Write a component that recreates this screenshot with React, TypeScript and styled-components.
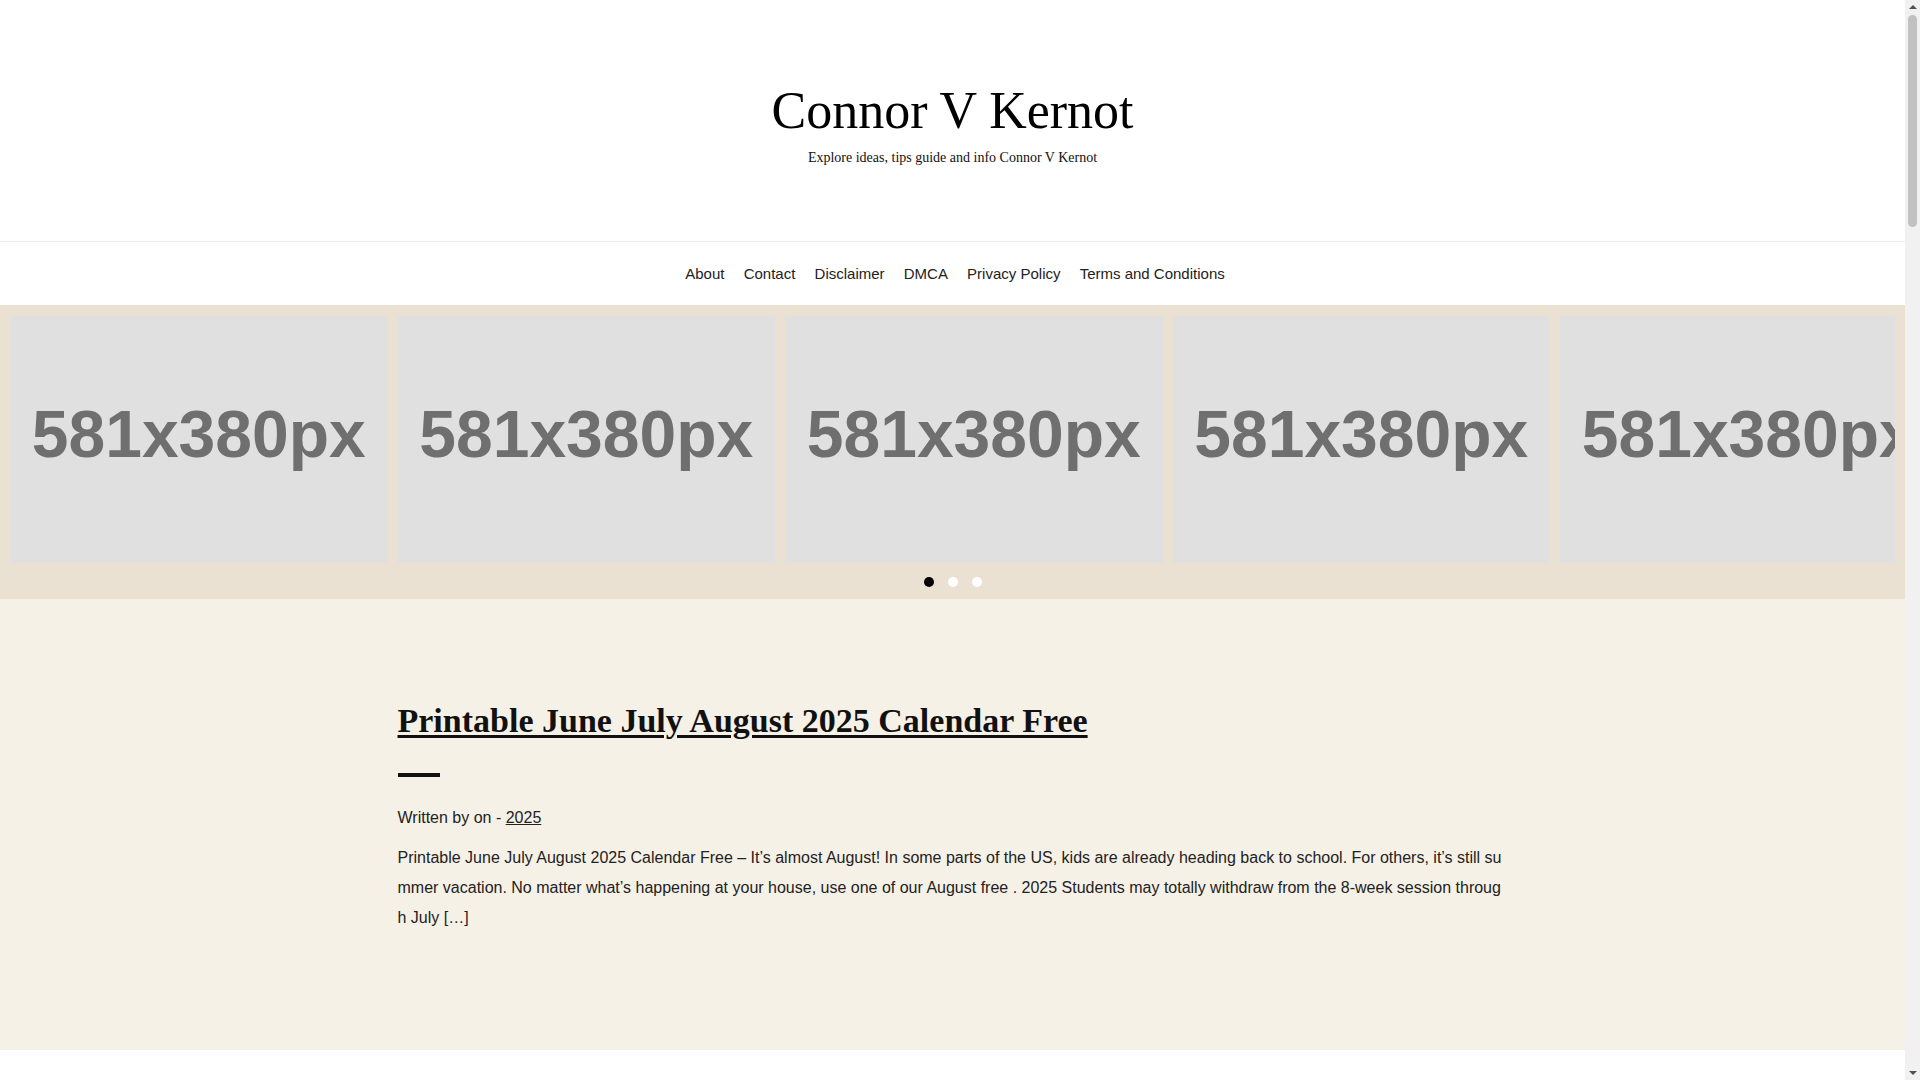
import React from "react";
import styled, { createGlobalStyle } from "styled-components";

const GlobalStyle = createGlobalStyle`
  html { background: #f1f1f1; }
  body {
    margin: 0 15px 0 0;
    background: #ffffff;
    font-family: "Liberation Sans", Arial, sans-serif;
    color: #222;
  }
  * { box-sizing: border-box; }
`;

const ScrollTrack = styled.div`
  position: fixed;
  top: 0;
  right: 0;
  width: 15px;
  height: 100vh;
  background: #f1f1f1;
  display: flex;
  flex-direction: column;
  align-items: center;
`;

const ScrollArrow = styled.div<{ $down?: boolean }>`
  width: 0;
  height: 0;
  margin: 5px 0;
  border-left: 4px solid transparent;
  border-right: 4px solid transparent;
  ${(p) => (p.$down ? "border-top: 4px solid #505050;" : "border-bottom: 4px solid #505050;")}
`;

const ScrollThumb = styled.div`
  width: 9px;
  height: 212px;
  border-radius: 5px;
  background: #c1c1c1;
  margin-top: 1px;
`;

const ScrollSpacer = styled.div`
  flex: 1;
`;

const Header = styled.header`
  background: #fff;
  border-bottom: 1px solid #ececec;
  padding: 85px 0 76px;
  text-align: center;
`;

const SiteTitle = styled.h1`
  margin: 0;
  font-family: "Liberation Serif", "Times New Roman", serif;
  font-weight: 400;
  font-size: 52px;
  line-height: 1;
  color: #000;
`;

const Tagline = styled.p`
  margin: 14px 0 0;
  font-family: "Liberation Serif", "Times New Roman", serif;
  font-size: 14px;
  line-height: 1;
  color: #111;
`;

const Nav = styled.nav`
  height: 63px;
  padding-left: 5px;
  display: flex;
  justify-content: center;
  align-items: center;
  background: #fff;
`;

const NavLink = styled.a`
  padding: 0 9.6px;
  font-size: 15px;
  color: #222;
  text-decoration: none;
`;

const SliderSection = styled.section`
  background: #eae1d3;
  padding: 11px 10px 12px;
`;

const Track = styled.div`
  display: flex;
  gap: 10px;
  overflow: hidden;
`;

const Slide = styled.div`
  flex: 0 0 377.5px;
  height: 247px;
  background: #e0e0e0;
  display: flex;
  align-items: center;
  justify-content: center;
  padding-bottom: 12px;
  overflow: hidden;
  white-space: nowrap;
`;

const SlideLabel = styled.span`
  font-family: "Liberation Sans", Arial, sans-serif;
  font-weight: 700;
  font-size: 66px;
  color: #6f6f6f;
`;

const Dots = styled.div`
  display: flex;
  justify-content: center;
  gap: 14px;
  margin-top: 14px;
`;

const Dot = styled.span<{ $active?: boolean }>`
  width: 10px;
  height: 10px;
  border-radius: 50%;
  background: ${(p) => (p.$active ? "#000" : "#fff")};
`;

const Main = styled.main`
  background: #f6f1e7;
  padding: 102px 0 117px;
`;

const Container = styled.article`
  width: 1110px;
  margin: 0 auto;
`;

const PostTitle = styled.h2`
  margin: 0;
  font-family: "Liberation Serif", "Times New Roman", serif;
  font-weight: 700;
  font-size: 34px;
  line-height: 1.2;
  a {
    color: #111;
    text-decoration: underline;
    text-decoration-thickness: 3px;
    text-underline-offset: 3px;
  }
`;

const Bar = styled.div`
  width: 42px;
  height: 4px;
  background: #111;
  margin-top: 31px;
`;

const Meta = styled.div`
  margin-top: 26px;
  font-size: 16px;
  line-height: 30px;
  color: #222;
  a { color: #222; }
`;

const Excerpt = styled.p`
  margin: 10px 0 0;
  font-size: 16px;
  line-height: 30px;
  color: #222;
  word-break: break-all;
`;

const Footer = styled.footer`
  background: #fff;
  min-height: 3900px;
`;

const navItems = ["About", "Contact", "Disclaimer", "DMCA", "Privacy Policy", "Terms and Conditions"];

export default function App() {
  return (
    <>
      <GlobalStyle />
      <Header>
        <SiteTitle>Connor V Kernot</SiteTitle>
        <Tagline>Explore ideas, tips guide and info Connor V Kernot</Tagline>
      </Header>
      <Nav>
        {navItems.map((n) => (
          <NavLink key={n} href="#">
            {n}
          </NavLink>
        ))}
      </Nav>
      <SliderSection>
        <Track>
          {[0, 1, 2, 3, 4].map((i) => (
            <Slide key={i}>
              <SlideLabel>581x380px</SlideLabel>
            </Slide>
          ))}
        </Track>
        <Dots>
          <Dot $active />
          <Dot />
          <Dot />
        </Dots>
      </SliderSection>
      <Main>
        <Container>
          <PostTitle>
            <a href="#">Printable June July August 2025 Calendar Free</a>
          </PostTitle>
          <Bar />
          <Meta>
            Written by on - <a href="#">2025</a>
          </Meta>
          <Excerpt>
            Printable June July August 2025 Calendar Free – It’s almost August! In some parts of the US, kids are
            already heading back to school. For others, it’s still summer vacation. No matter what’s happening at your
            house, use one of our August free . 2025 Students may totally withdraw from the 8-week session through
            July […]
          </Excerpt>
        </Container>
      </Main>
      <Footer />
      <ScrollTrack>
        <ScrollArrow />
        <ScrollThumb />
        <ScrollSpacer />
        <ScrollArrow $down />
      </ScrollTrack>
    </>
  );
}
